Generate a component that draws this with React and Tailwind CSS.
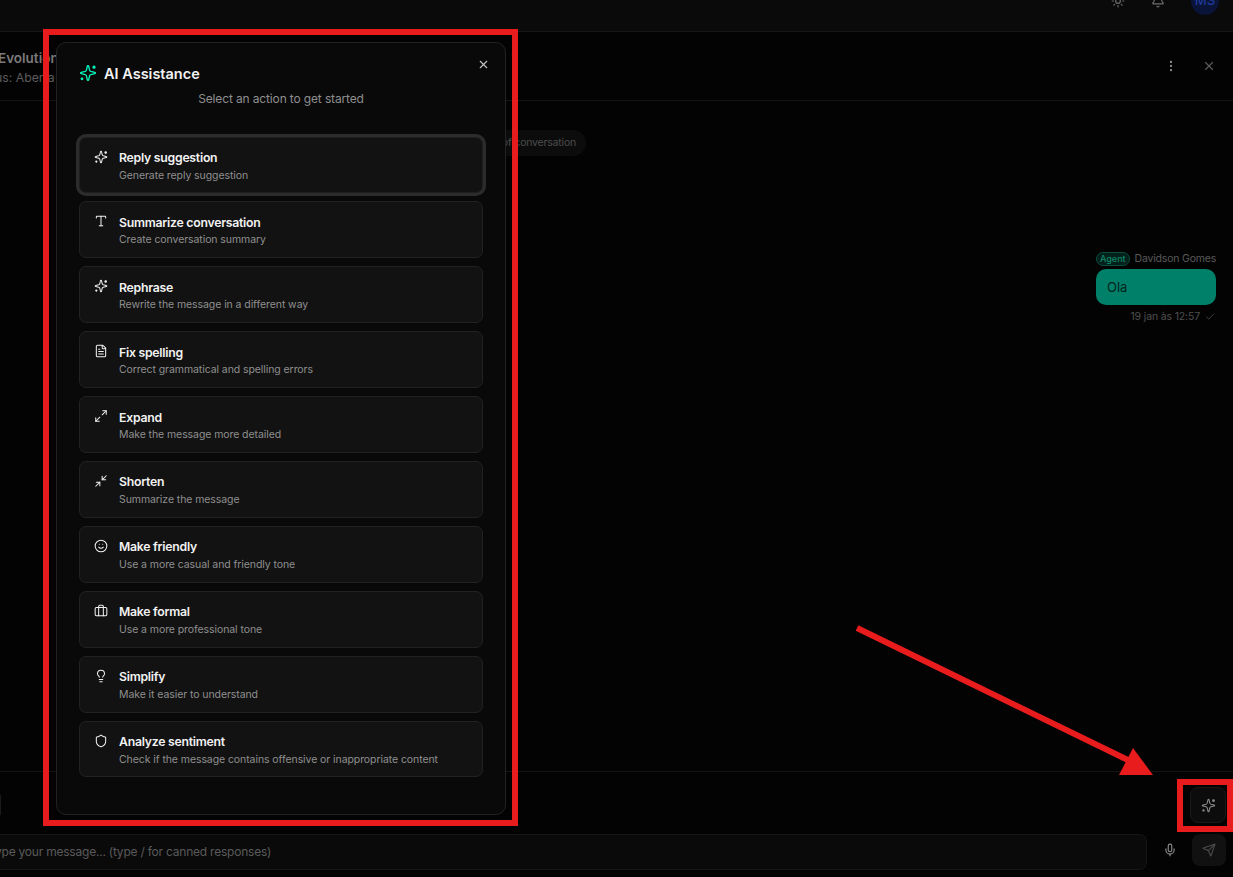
import React from "react";
import {
  Sun,
  Bell,
  EllipsisVertical,
  X,
  Check,
  Mic,
  Send,
  Type,
  FileText,
  Maximize2,
  Minimize2,
  Smile,
  Briefcase,
  Lightbulb,
  Shield,
} from "lucide-react";

// four point star with two small dots, the lucide sparkles has plus marks instead
const SparkDots = ({ className }) => (
  <svg
    viewBox="0 0 24 24"
    fill="none"
    stroke="currentColor"
    strokeWidth="1.75"
    strokeLinecap="round"
    strokeLinejoin="round"
    className={className}
  >
    <path d="M11.1 3A.9.9 0 0 1 12.9 3L14.1 8.2A3 3 0 0 0 15.8 9.9L21 11.1A.9.9 0 0 1 21 12.9L15.8 14.1A3 3 0 0 0 14.1 15.8L12.9 21A.9.9 0 0 1 11.1 21L9.9 15.8A3 3 0 0 0 8.2 14.1L3 12.9A.9.9 0 0 1 3 11.1L8.2 9.9A3 3 0 0 0 9.9 8.2Z" />
    <circle cx="20" cy="4.2" r="1.3" fill="currentColor" />
    <circle cx="4" cy="19.8" r="1" fill="currentColor" />
  </svg>
);

const actions = [
  { title: "Reply suggestion", desc: "Generate reply suggestion", icon: SparkDots, active: true },
  { title: "Summarize conversation", desc: "Create conversation summary", icon: Type },
  { title: "Rephrase", desc: "Rewrite the message in a different way", icon: SparkDots },
  { title: "Fix spelling", desc: "Correct grammatical and spelling errors", icon: FileText },
  { title: "Expand", desc: "Make the message more detailed", icon: Maximize2 },
  { title: "Shorten", desc: "Summarize the message", icon: Minimize2 },
  { title: "Make friendly", desc: "Use a more casual and friendly tone", icon: Smile },
  { title: "Make formal", desc: "Use a more professional tone", icon: Briefcase },
  { title: "Simplify", desc: "Make it easier to understand", icon: Lightbulb },
  { title: "Analyze sentiment", desc: "Check if the message contains offensive or inappropriate content", icon: Shield },
];

const ActionCard = ({ title, desc, icon: Icon, active }) => (
  <button
    className={`flex h-[56.9px] w-full items-start gap-[11px] rounded-[7px] border bg-[#121212] px-[14px] pt-[11.5px] text-left ${
      active ? "border-[#1f1f1f] ring-[3px] ring-[#2c2c2c]" : "border-[#222222]"
    }`}
  >
    <Icon className="mt-[0.5px] h-[14px] w-[14px] shrink-0 text-[#f2f2f2]" strokeWidth={1.75} />
    <span className="flex flex-col">
      <span className="text-[12.25px] leading-[17.5px] font-semibold tracking-[-0.25px] text-[#f2f2f2]">{title}</span>
      <span className="mt-[2px] text-[10.5px] leading-[14px] tracking-[-0.08px] text-[#8f8f8f]">{desc}</span>
    </span>
  </button>
);

const App = () => {
  return (
    <div className="relative flex h-[877px] w-[1233px] flex-col overflow-hidden bg-[#030303] font-['Inter',sans-serif]">
      {/* top bar, cut off by the screenshot */}
      <div className="h-8 shrink-0 overflow-hidden border-b border-[#161616] bg-[#0a0a0a]">
        <div className="-mt-[13px] flex items-center justify-end pr-[14px]">
          <Sun className="h-[14px] w-[14px] text-[#6f6f6f]" />
          <Bell className="ml-[26px] h-[14px] w-[14px] text-[#6f6f6f]" />
          <div className="ml-[26px] flex h-7 w-7 items-center justify-center rounded-full bg-[#0a1338] text-[13px] font-medium text-[#1e3a9a]">
            MS
          </div>
        </div>
      </div>

      {/* chat header */}
      <div className="flex h-[69px] shrink-0 items-center justify-between border-b border-[#141414] pr-[17px]">
        <div className="-ml-[2px] flex flex-col pt-[4px]">
          <span className="text-[13.5px] leading-[18px] font-semibold text-[#7a7a7a]">Evolution</span>
          <span className="-ml-[3px] mt-[2px] text-[12.25px] leading-[18px] text-[#5c5c5c]">us: Aberta</span>
        </div>
        <div className="flex items-center gap-[24px]">
          <EllipsisVertical className="h-[14px] w-[14px] text-[#8a8a8a]" />
          <X className="h-[14px] w-[14px] text-[#5c5c5c]" />
        </div>
      </div>

      {/* messages */}
      <div className="flex flex-1 flex-col px-[17px] pt-[29px]">
        <div className="ml-[463px] flex h-[26px] w-[106px] items-center justify-end rounded-full bg-[#0c0c0c] pr-[10px] text-[10.5px] tracking-[-0.2px] text-[#4d4d4d]">
          of conversation
        </div>
        <div className="mt-[96px] flex flex-col items-end">
          <div className="flex items-center gap-[5px]">
            <span className="rounded-full border border-[#0b4d3f] bg-[#04201a] px-[3px] text-[9px] leading-[12px] font-medium text-[#0d8a6c]">
              Agent
            </span>
            <span className="text-[10.5px] leading-[14px] tracking-[-0.2px] text-[#5a5a5a]">Davidson Gomes</span>
          </div>
          <div className="mt-[3px] flex h-9 w-[120px] items-center rounded-[10px] bg-[#008068] px-[11px] pt-[1px] text-[13px] text-[#04241d]">
            Ola
          </div>
          <div className="mt-[5px] flex items-center gap-[5px] text-[10.5px] leading-[14px] tracking-[-0.15px] text-[#4f4f4f]">
            19 jan às 12:57
            <Check className="mr-[1px] h-[10px] w-[10px] text-[#4f4f4f]" />
          </div>
        </div>
      </div>

      {/* composer */}
      <div className="h-[106px] shrink-0 border-t border-[#141414]">
        <div className="flex h-[62px] items-center justify-between pt-[4px] pr-[7px]">
          <div className="h-5 w-px bg-[#1a1a1a]" />
          <div className="flex h-9 w-9 items-center justify-center rounded-[8px] border border-[#1a1a1a] bg-[#0c0c0c]">
            <SparkDots className="h-[15px] w-[15px] text-[#8a8a8a]" />
          </div>
        </div>
        <div className="flex items-start pr-[7px]">
          <div className="flex h-9 flex-1 items-center rounded-r-[8px] border border-l-0 border-[#161616] bg-[#0a0a0a] text-[12px] tracking-[-0.22px] text-[#5a5a5a]">
            <span className="-ml-[5px]">ype your message... (type / for canned responses)</span>
          </div>
          <div className="flex h-8 w-[45px] items-center justify-center">
            <Mic className="h-[14px] w-[14px] text-[#8a8a8a]" />
          </div>
          <div className="flex h-8 w-[34px] items-center justify-center rounded-[8px] bg-[#111111]">
            <Send className="h-[14px] w-[14px] text-[#4a4a4a]" />
          </div>
        </div>
      </div>

      {/* dialog */}
      <div className="absolute top-[42px] left-[56px] flex h-[773px] w-[450px] flex-col rounded-[10px] border border-[#222222] bg-[#090909] px-[22px] pt-[19.5px]">
        <div className="flex items-center gap-[7px]">
          <SparkDots className="h-[18px] w-[18px] text-[#00f5bd]" />
          <h2 className="text-[14.5px] leading-[21px] font-semibold text-[#f2f2f2]">AI Assistance</h2>
        </div>
        <p className="mt-[6.5px] text-center text-[12px] leading-[17.5px] tracking-[-0.14px] text-[#8f8f8f]">
          Select an action to get started
        </p>
        <div className="mt-[29px] flex flex-col gap-2">
          {actions.map((a) => (
            <ActionCard key={a.title} {...a} />
          ))}
        </div>
        <X className="absolute top-[15px] right-[15px] h-[13px] w-[13px] text-[#c8c8c8]" />
      </div>

      {/* red annotations drawn on top of the screenshot */}
      <div className="pointer-events-none absolute top-[29px] left-[43px] h-[797px] w-[475px] border-[6px] border-[#e81c1c]" />
      <div className="pointer-events-none absolute top-[779px] left-[1177px] h-[53px] w-[56px] border-[6px] border-[#e81c1c]" />
      <svg className="pointer-events-none absolute top-0 left-0 h-[877px] w-[1233px]" viewBox="0 0 1233 877">
        <line x1="857" y1="628" x2="1134" y2="763" stroke="#e81c1c" strokeWidth="6" />
        <polygon points="1133,748 1153,775 1119,775" fill="#e81c1c" />
      </svg>
    </div>
  );
};

export default App;
